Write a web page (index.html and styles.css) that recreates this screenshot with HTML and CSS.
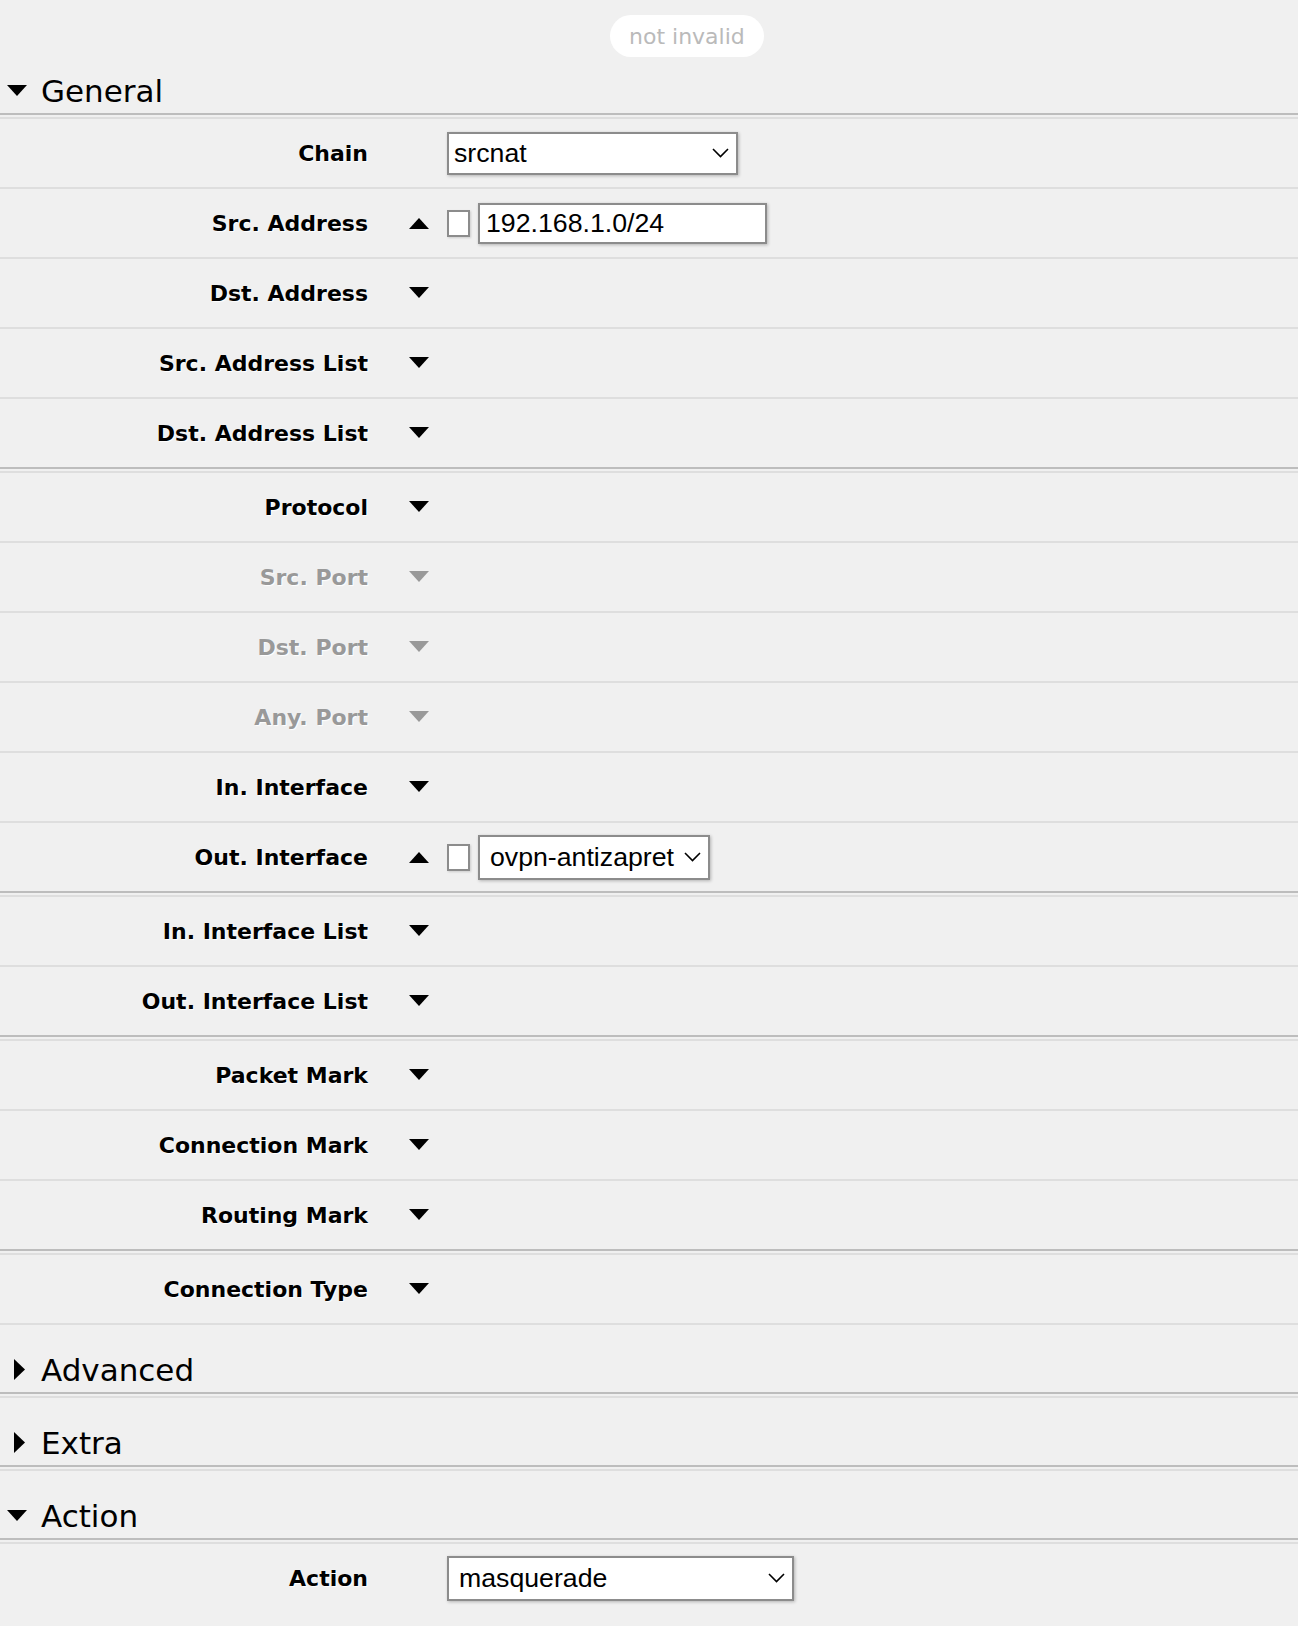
FILE: index.html
```html
<!DOCTYPE html>
<html>
<head>
<meta charset="utf-8">
<link rel="stylesheet" href="styles.css">
</head>
<body>
<div class="top"><span class="badge">not invalid</span></div>

<div class="sec-head first">
  <span class="tri"><svg width="20" height="12" viewBox="0 0 20 12"><polygon points="0,0 20,0 10,11" fill="#000"/></svg></span>
  <span class="sec-title">General</span>
</div>
<div class="sec-body">
  <div class="group">
    <div class="row">
      <div class="lbl">Chain</div>
      <div class="tog"></div>
      <div class="ctrl">
        <div class="sel sel-chain"><span class="val">srcnat</span><svg class="chev" width="17" height="10" viewBox="0 0 17 10"><polyline points="1,1 8.5,8.5 16,1" fill="none" stroke="#000" stroke-width="1.6"/></svg></div>
      </div>
    </div>
    <div class="row">
      <div class="lbl">Src. Address</div>
      <div class="tog"><svg width="20" height="12" viewBox="0 0 20 12"><polygon points="0,12 20,12 10,1" fill="#000"/></svg></div>
      <div class="ctrl">
        <span class="chk"></span>
        <div class="inp">192.168.1.0/24</div>
      </div>
    </div>
    <div class="row">
      <div class="lbl">Dst. Address</div>
      <div class="tog"><svg width="20" height="12" viewBox="0 0 20 12"><polygon points="0,0 20,0 10,11" fill="#000"/></svg></div>
    </div>
    <div class="row">
      <div class="lbl">Src. Address List</div>
      <div class="tog"><svg width="20" height="12" viewBox="0 0 20 12"><polygon points="0,0 20,0 10,11" fill="#000"/></svg></div>
    </div>
    <div class="row">
      <div class="lbl">Dst. Address List</div>
      <div class="tog"><svg width="20" height="12" viewBox="0 0 20 12"><polygon points="0,0 20,0 10,11" fill="#000"/></svg></div>
    </div>
  </div>

  <div class="group">
    <div class="row">
      <div class="lbl">Protocol</div>
      <div class="tog"><svg width="20" height="12" viewBox="0 0 20 12"><polygon points="0,0 20,0 10,11" fill="#000"/></svg></div>
    </div>
    <div class="row dis">
      <div class="lbl">Src. Port</div>
      <div class="tog"><svg width="20" height="12" viewBox="0 0 20 12"><polygon points="0,0 20,0 10,11" fill="#999"/></svg></div>
    </div>
    <div class="row dis">
      <div class="lbl">Dst. Port</div>
      <div class="tog"><svg width="20" height="12" viewBox="0 0 20 12"><polygon points="0,0 20,0 10,11" fill="#999"/></svg></div>
    </div>
    <div class="row dis">
      <div class="lbl">Any. Port</div>
      <div class="tog"><svg width="20" height="12" viewBox="0 0 20 12"><polygon points="0,0 20,0 10,11" fill="#999"/></svg></div>
    </div>
    <div class="row">
      <div class="lbl">In. Interface</div>
      <div class="tog"><svg width="20" height="12" viewBox="0 0 20 12"><polygon points="0,0 20,0 10,11" fill="#000"/></svg></div>
    </div>
    <div class="row">
      <div class="lbl">Out. Interface</div>
      <div class="tog"><svg width="20" height="12" viewBox="0 0 20 12"><polygon points="0,12 20,12 10,1" fill="#000"/></svg></div>
      <div class="ctrl">
        <span class="chk"></span>
        <div class="sel sel-auto"><span class="val">ovpn-antizapret</span><svg class="chev" width="17" height="10" viewBox="0 0 17 10"><polyline points="1,1 8.5,8.5 16,1" fill="none" stroke="#000" stroke-width="1.6"/></svg></div>
      </div>
    </div>
  </div>

  <div class="group">
    <div class="row">
      <div class="lbl">In. Interface List</div>
      <div class="tog"><svg width="20" height="12" viewBox="0 0 20 12"><polygon points="0,0 20,0 10,11" fill="#000"/></svg></div>
    </div>
    <div class="row">
      <div class="lbl">Out. Interface List</div>
      <div class="tog"><svg width="20" height="12" viewBox="0 0 20 12"><polygon points="0,0 20,0 10,11" fill="#000"/></svg></div>
    </div>
  </div>

  <div class="group">
    <div class="row">
      <div class="lbl">Packet Mark</div>
      <div class="tog"><svg width="20" height="12" viewBox="0 0 20 12"><polygon points="0,0 20,0 10,11" fill="#000"/></svg></div>
    </div>
    <div class="row">
      <div class="lbl">Connection Mark</div>
      <div class="tog"><svg width="20" height="12" viewBox="0 0 20 12"><polygon points="0,0 20,0 10,11" fill="#000"/></svg></div>
    </div>
    <div class="row">
      <div class="lbl">Routing Mark</div>
      <div class="tog"><svg width="20" height="12" viewBox="0 0 20 12"><polygon points="0,0 20,0 10,11" fill="#000"/></svg></div>
    </div>
  </div>

  <div class="group">
    <div class="row">
      <div class="lbl">Connection Type</div>
      <div class="tog"><svg width="20" height="12" viewBox="0 0 20 12"><polygon points="0,0 20,0 10,11" fill="#000"/></svg></div>
    </div>
  </div>
</div>

<div class="sec-head">
  <span class="tri"><svg width="20" height="22" viewBox="0 0 20 22"><polygon points="7,0 18,10.5 7,21" fill="#000"/></svg></span>
  <span class="sec-title">Advanced</span>
</div>
<div class="sec-body"></div>

<div class="sec-head">
  <span class="tri"><svg width="20" height="22" viewBox="0 0 20 22"><polygon points="7,0 18,10.5 7,21" fill="#000"/></svg></span>
  <span class="sec-title">Extra</span>
</div>
<div class="sec-body"></div>

<div class="sec-head">
  <span class="tri"><svg width="20" height="12" viewBox="0 0 20 12"><polygon points="0,0 20,0 10,11" fill="#000"/></svg></span>
  <span class="sec-title">Action</span>
</div>
<div class="sec-body">
  <div class="group last">
    <div class="row">
      <div class="lbl">Action</div>
      <div class="tog"></div>
      <div class="ctrl">
        <div class="sel sel-action"><span class="val">masquerade</span><svg class="chev" width="17" height="10" viewBox="0 0 17 10"><polyline points="1,1 8.5,8.5 16,1" fill="none" stroke="#000" stroke-width="1.6"/></svg></div>
      </div>
    </div>
  </div>
</div>
</body>
</html>
```

FILE: styles.css
```css
html, body {
  margin: 0;
  padding: 0;
  background: #f0f0f0;
}

body {
  font-family: "DejaVu Sans", Verdana, sans-serif;
  color: #000;
}

.top {
  height: 57px;
  box-sizing: border-box;
  padding: 15px 0 0 610px;
}

.badge {
  display: inline-flex;
  align-items: center;
  height: 42px;
  box-sizing: border-box;
  padding: 0 19px;
  border-radius: 21px;
  background: #fff;
  color: #bababa;
  font-size: 22px;
}

.sec-head {
  display: flex;
  align-items: center;
  padding: 27px 0 4px 7px;
  border-bottom: 2px solid #bdbdbd;
}

.sec-head.first {
  padding-top: 16px;
}

.tri {
  width: 20px;
  margin-right: 14px;
  display: flex;
  align-items: center;
  justify-content: flex-start;
}

.tri svg {
  display: block;
}

.sec-title {
  font-size: 31px;
  line-height: 36px;
}

.sec-body {
  margin-top: 2px;
  border-top: 2px solid #dedede;
}

.group:not(:last-child) > .row:last-child {
  border-bottom-color: #bdbdbd;
}

.group + .group {
  margin-top: 2px;
  border-top: 2px solid #dedede;
}

.group.last > .row:last-child {
  border-bottom-color: transparent;
}

.row {
  display: flex;
  align-items: center;
  height: 68px;
  border-bottom: 2px solid #dedede;
}

.lbl {
  width: 368px;
  flex: none;
  text-align: right;
  font-weight: bold;
  font-size: 22px;
  text-shadow: 1px 1px 1px #fff;
}

.row.dis .lbl {
  color: #999;
}

.tog {
  width: 79px;
  flex: none;
  box-sizing: border-box;
  padding-left: 41px;
  display: flex;
  align-items: center;
}

.tog svg {
  display: block;
}

.ctrl {
  display: flex;
  align-items: center;
  gap: 8px;
}

.chk {
  width: 23px;
  height: 27px;
  box-sizing: border-box;
  border: 2px solid #8c8c8c;
  background: #fff;
  box-shadow: 1px 1px 2px rgba(0,0,0,0.15);
}

.inp, .sel {
  box-sizing: border-box;
  border: 2px solid #8c8c8c;
  background: #fff;
  box-shadow: 1px 1px 3px rgba(0,0,0,0.25);
  font-family: "Liberation Sans", Arial, sans-serif;
  font-size: 26.7px;
  display: flex;
  align-items: center;
}

.inp {
  width: 289px;
  height: 41px;
  padding-left: 6px;
}

.sel {
  height: 45px;
  padding: 0 7px 0 10px;
}

.sel .val {
  flex: 1;
}

.sel .chev {
  display: block;
  flex: none;
  margin-left: 10px;
}

.sel-chain {
  width: 291px;
  height: 43px;
  padding-left: 5px;
}

.sel-action {
  width: 347px;
  padding-left: 10px;
}
```
